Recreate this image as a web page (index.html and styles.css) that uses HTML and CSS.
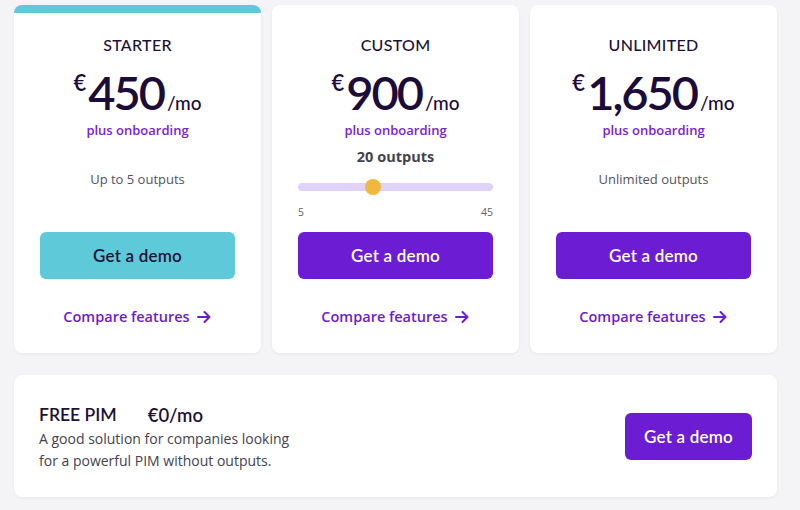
FILE: index.html
```html
<!DOCTYPE html>
<html>
<head>
<meta charset="utf-8">
<link rel="stylesheet" href="styles.css">
</head>
<body>
<div class="page">
  <div class="plans">
    <div class="card card-starter">
      <div class="title">STARTER</div>
      <div class="price"><span class="cur">€</span><span class="amt">450</span><span class="per">/mo</span></div>
      <div class="onb">plus onboarding</div>
      <div class="detail"><div class="outputs">Up to 5 outputs</div></div>
      <a class="btn btn-teal">Get a demo</a>
      <a class="compare">Compare features <svg class="arrow" viewBox="0 0 16 16" width="16" height="16"><path d="M2 8h11M8.5 3l5 5-5 5" fill="none" stroke="currentColor" stroke-width="2" stroke-linecap="round" stroke-linejoin="round"/></svg></a>
    </div>
    <div class="card">
      <div class="title">CUSTOM</div>
      <div class="price"><span class="cur">€</span><span class="amt">900</span><span class="per">/mo</span></div>
      <div class="onb">plus onboarding</div>
      <div class="detail detail-slider">
        <div class="count">20 outputs</div>
        <div class="slider"><div class="track"></div><div class="thumb" style="left: 38.5%"></div></div>
        <div class="range"><span>5</span><span>45</span></div>
      </div>
      <a class="btn">Get a demo</a>
      <a class="compare">Compare features <svg class="arrow" viewBox="0 0 16 16" width="16" height="16"><path d="M2 8h11M8.5 3l5 5-5 5" fill="none" stroke="currentColor" stroke-width="2" stroke-linecap="round" stroke-linejoin="round"/></svg></a>
    </div>
    <div class="card">
      <div class="title">UNLIMITED</div>
      <div class="price"><span class="cur">€</span><span class="amt">1,650</span><span class="per">/mo</span></div>
      <div class="onb">plus onboarding</div>
      <div class="detail"><div class="outputs">Unlimited outputs</div></div>
      <a class="btn">Get a demo</a>
      <a class="compare">Compare features <svg class="arrow" viewBox="0 0 16 16" width="16" height="16"><path d="M2 8h11M8.5 3l5 5-5 5" fill="none" stroke="currentColor" stroke-width="2" stroke-linecap="round" stroke-linejoin="round"/></svg></a>
    </div>
  </div>
  <div class="free">
    <div class="free-text">
      <div class="free-head"><span>FREE PIM</span><span class="free-price">€0/mo</span></div>
      <p class="free-desc">A good solution for companies looking<br>for a powerful PIM without outputs.</p>
    </div>
    <a class="btn btn-small">Get a demo</a>
  </div>
</div>
</body>
</html>
```
FILE: styles.css
```css
html, body {
  margin: 0;
  padding: 0;
  background: #f4f4f6;
}
body {
  width: 800px;
  height: 510px;
  overflow: hidden;
  font-family: "Open Sans", "Noto Sans", sans-serif;
  color: #1b1236;
}
.page {
  padding: 5px 23px 0 14px;
}
.plans {
  display: grid;
  grid-template-columns: repeat(3, 247px);
  gap: 11px;
}
.card {
  background: #fff;
  border-radius: 8px;
  border-top: 8px solid #fff;
  padding: 22px 26px 25px;
  display: flex;
  flex-direction: column;
  align-items: center;
  box-shadow: 0 1px 3px rgba(30, 20, 60, 0.06);
}
.card-starter {
  border-top-color: #5ecad9;
}
.title {
  font-family: "Lato", sans-serif;
  font-weight: 500;
  font-size: 16px;
  line-height: 20px;
  letter-spacing: 0.3px;
  color: #1b1236;
}
.price {
  margin-top: 9px;
  height: 56px;
  line-height: 56px;
  font-family: "Lato", sans-serif;
  color: #1b0c3a;
  display: flex;
  align-items: baseline;
}
.cur {
  font-size: 22px;
  font-weight: 600;
  align-self: flex-start;
  line-height: 38px;
  margin-right: 2px;
}
.amt {
  font-size: 47px;
  font-weight: 600;
  letter-spacing: -2px;
}
.per {
  font-size: 19px;
  font-weight: 500;
  margin-left: 3px;
}
.onb {
  font-size: 13px;
  font-weight: 600;
  line-height: 20px;
  color: #7a22dc;
}
.detail {
  height: 92px;
  width: 100%;
  box-sizing: border-box;
  padding-top: 29px;
  display: flex;
  flex-direction: column;
  align-items: center;
}
.outputs {
  font-size: 13px;
  line-height: 20px;
  color: #555260;
}
.detail-slider {
  padding-top: 7px;
  align-items: stretch;
}
.count {
  text-align: center;
  font-size: 14.5px;
  font-weight: 700;
  line-height: 20px;
  color: #45424f;
}
.slider {
  position: relative;
  height: 8px;
  margin-top: 16px;
}
.track {
  height: 8px;
  border-radius: 4px;
  background: #e0d3fa;
}
.thumb {
  position: absolute;
  top: -4px;
  width: 16px;
  height: 16px;
  margin-left: -8px;
  border-radius: 50%;
  background: #f0b83e;
}
.range {
  display: flex;
  justify-content: space-between;
  margin-top: 13px;
  font-size: 10.5px;
  line-height: 16px;
  color: #66636e;
}
.btn {
  display: flex;
  align-items: center;
  justify-content: center;
  width: 195px;
  height: 47px;
  border-radius: 6px;
  background: #6c1cd3;
  color: #fff;
  font-family: "Lato", sans-serif;
  font-size: 17px;
  font-weight: 600;
  letter-spacing: 0.2px;
}
.btn-teal {
  background: #5ecad9;
  color: #1b1236;
}
.compare {
  margin-top: 27px;
  display: flex;
  align-items: center;
  gap: 6px;
  font-size: 14.5px;
  font-weight: 600;
  line-height: 22px;
  color: #6c1cd3;
}
.arrow {
  display: block;
}
.free {
  margin-top: 22px;
  background: #fff;
  border-radius: 8px;
  padding: 25px 25px 25px;
  display: flex;
  align-items: center;
  justify-content: space-between;
  box-shadow: 0 1px 3px rgba(30, 20, 60, 0.06);
}
.free-text {
  padding-top: 4px;
}
.free-head {
  font-family: "Lato", sans-serif;
  font-size: 17.5px;
  font-weight: 600;
  line-height: 22px;
  color: #1b1236;
  display: flex;
}
.free-price {
  margin-left: 31px;
  font-size: 18.5px;
}
.free-desc {
  margin: 2px 0 0;
  font-size: 14px;
  line-height: 22px;
  color: #45424f;
}
.btn-small {
  width: 127px;
}
```
